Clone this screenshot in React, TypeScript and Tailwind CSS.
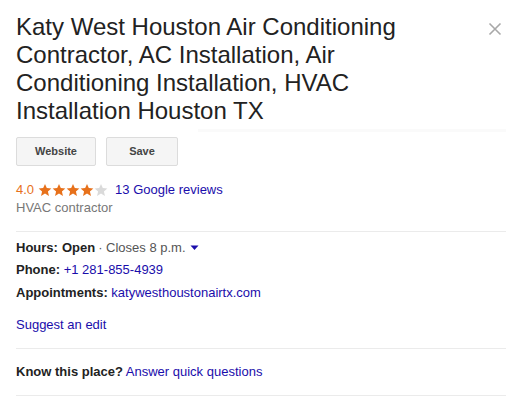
const FONT = { fontFamily: '"Liberation Sans", Arial, sans-serif' };

function Star({ filled }: { filled: boolean }) {
  return (
    <svg width="14" height="14" viewBox="0 0 24 24" className="inline-block">
      <path
        d="M12 1.5l3.1 7.2 7.8.7-5.9 5.2 1.8 7.7L12 18.2l-6.8 4.1 1.8-7.7-5.9-5.2 7.8-.7z"
        fill={filled ? "#e7711b" : "#dadada"}
      />
    </svg>
  );
}

export default function App() {
  return (
    <div className="w-[525px] h-[406px] bg-white overflow-hidden" style={FONT}>
      <div className="pl-4 pr-[19px] pt-[13px]">
        <div className="flex justify-between">
          <h1 className="w-[440px] text-[24px] leading-[28px] text-[#222] font-normal">
            Katy West Houston Air Conditioning Contractor, AC Installation, Air
            Conditioning Installation, HVAC Installation Houston TX
          </h1>
          <button className="mt-[9px] mr-[4px] h-[14px] w-[14px]">
            <svg width="14" height="14" viewBox="0 0 14 14">
              <path d="M1.5 1.5l11 11M12.5 1.5l-11 11" stroke="#a8a8a8" strokeWidth="1.6" />
            </svg>
          </button>
        </div>

        <div className="mt-[12px] flex items-center gap-[10px]">
          <button className="h-[29px] w-[80px] rounded-[2px] border border-[#dcdcdc] bg-[#f5f5f5] text-[11px] font-bold text-[#444]">
            Website
          </button>
          <button className="h-[29px] w-[72px] rounded-[2px] border border-[#dcdcdc] bg-[#f5f5f5] text-[11px] font-bold text-[#444]">
            Save
          </button>
          <div className="ml-[10px] h-[3px] flex-1 self-start -mt-[8px] bg-[#fafafa]" />
        </div>

        <div className="mt-[15px] flex items-center text-[13px] leading-[18px]">
          <span className="text-[#e7711b]">4.0</span>
          <span className="ml-[4px] flex">
            <Star filled />
            <Star filled />
            <Star filled />
            <Star filled />
            <Star filled={false} />
          </span>
          <a className="ml-[7px] text-[#1a0dab]">13 Google reviews</a>
        </div>
        <div className="text-[13px] leading-[18px] text-[#777]">HVAC contractor</div>

        <div className="mt-[14px] border-t border-[#ebebeb]" />

        <div className="pt-[5px] text-[13px] leading-[22px] text-[#222]">
          <div className="flex items-center">
            <span className="font-bold">Hours:</span>
            <span className="ml-[4px] font-bold">Open</span>
            <span className="ml-[3px] text-[#555]">· Closes 8 p.m.</span>
            <svg width="9" height="6" viewBox="0 0 9 6" className="ml-[4px]">
              <path d="M0.5 0.5h8L4.5 5z" fill="#1a0dab" />
            </svg>
          </div>
          <div>
            <span className="font-bold">Phone:</span>{" "}
            <a className="text-[#1a0dab]">+1 281-855-4939</a>
          </div>
          <div className="mt-[1px]">
            <span className="font-bold">Appointments:</span>{" "}
            <a className="text-[#1a0dab]">katywesthoustonairtx.com</a>
          </div>
          <div className="mt-[10px]">
            <a className="text-[#1a0dab]">Suggest an edit</a>
          </div>
        </div>

        <div className="mt-[12px] border-t border-[#ebebeb]" />

        <div className="py-[13px] text-[13px] leading-[20px] text-[#222]">
          <span className="font-bold">Know this place?</span>{" "}
          <a className="text-[#1a0dab]">Answer quick questions</a>
        </div>

        <div className="border-t border-[#ebebeb]" />
      </div>
    </div>
  );
}
